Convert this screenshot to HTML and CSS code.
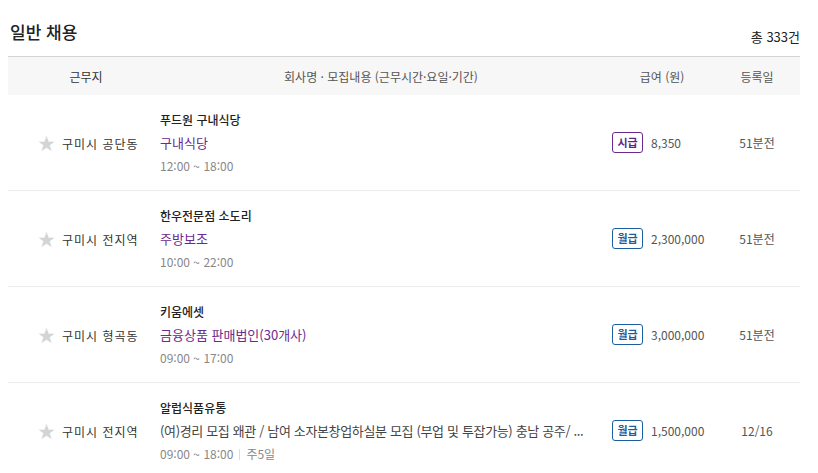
FILE: index.html
```html
<!DOCTYPE html>
<html lang="ko">
<head>
    <meta charset="UTF-8">
    <title>일반 채용</title>
    <link rel="stylesheet" href="styles.css">
</head>
<body>
<div class="jobs">
    <div class="jobs-head">
        <h2>일반 채용</h2>
        <span class="total">총 333건</span>
    </div>

    <div class="table">
        <div class="row head">
            <div class="col-loc">근무지</div>
            <div class="col-info">회사명 · 모집내용 (근무시간·요일·기간)</div>
            <div class="col-pay">급여 (원)</div>
            <div class="col-date">등록일</div>
        </div>

        <div class="row">
            <div class="col-loc"><span class="star">★</span>구미시 공단동</div>
            <div class="col-info">
                <div class="company">푸드원 구내식당</div>
                <div class="title">구내식당</div>
                <div class="time">12:00 ~ 18:00</div>
            </div>
            <div class="col-pay"><span class="badge hourly">시급</span>8,350</div>
            <div class="col-date">51분전</div>
        </div>

        <div class="row">
            <div class="col-loc"><span class="star">★</span>구미시 전지역</div>
            <div class="col-info">
                <div class="company">한우전문점 소도리</div>
                <div class="title">주방보조</div>
                <div class="time">10:00 ~ 22:00</div>
            </div>
            <div class="col-pay"><span class="badge monthly">월급</span>2,300,000</div>
            <div class="col-date">51분전</div>
        </div>

        <div class="row">
            <div class="col-loc"><span class="star">★</span>구미시 형곡동</div>
            <div class="col-info">
                <div class="company">키움에셋</div>
                <div class="title">금융상품 판매법인(30개사)</div>
                <div class="time">09:00 ~ 17:00</div>
            </div>
            <div class="col-pay"><span class="badge monthly">월급</span>3,000,000</div>
            <div class="col-date">51분전</div>
        </div>

        <div class="row">
            <div class="col-loc"><span class="star">★</span>구미시 전지역</div>
            <div class="col-info">
                <div class="company">알럽식품유통</div>
                <div class="title plain">(여)경리 모집 왜관 / 남여 소자본창업하실분 모집 (부업 및 투잡가능) 충남 공주/ ...</div>
                <div class="time">09:00 ~ 18:00<span class="sep"></span>주5일</div>
            </div>
            <div class="col-pay"><span class="badge monthly">월급</span>1,500,000</div>
            <div class="col-date">12/16</div>
        </div>
    </div>
</div>
</body>
</html>
```

FILE: styles.css
```css
body {
    margin: 0;
    background: #fff;
    font-family: "Noto Sans CJK KR", "Noto Sans", sans-serif;
    color: #333;
}

.jobs {
    padding: 20px 18px 0 8px;
}

.jobs-head {
    display: flex;
    justify-content: space-between;
    align-items: flex-end;
    padding: 0 0 12px 2px;
}

.jobs-head h2 {
    margin: 0;
    font-size: 17px;
    font-weight: 500;
    line-height: 24px;
    color: #222;
}

.total {
    font-size: 13px;
    line-height: 16px;
    color: #222;
    margin-bottom: -1px;
}

.table {
    border-top: 1px solid #d3d3d3;
}

.row {
    display: flex;
    align-items: center;
    height: 95px;
    border-bottom: 1px solid #ececec;
    font-size: 12px;
}

.row.head {
    height: 38px;
    background: #f7f7f7;
    border-bottom: none;
    color: #555;
    font-size: 12px;
}

.col-loc {
    width: 152px;
    padding-left: 30px;
    box-sizing: border-box;
    color: #333;
    letter-spacing: 1px;
}

.col-info {
    width: 442px;
    min-width: 0;
}

.col-pay {
    width: 120px;
    padding-left: 10px;
    box-sizing: border-box;
    display: flex;
    align-items: center;
    color: #555;
}

.col-date {
    flex: 1;
    text-align: center;
    padding-right: 8px;
    color: #555;
}

.head .col-loc,
.head .col-info,
.head .col-pay {
    text-align: center;
    letter-spacing: 0;
    display: block;
}

.head .col-loc {
    padding-left: 4px;
}

.head .col-pay {
    padding-left: 0;
}

.star {
    color: #d4d4d4;
    font-size: 17px;
    margin-right: 7px;
    letter-spacing: 0;
    vertical-align: -1px;
}

.company {
    font-size: 12px;
    font-weight: 500;
    line-height: 23px;
    color: #222;
}

.title {
    font-size: 13px;
    line-height: 23px;
    color: #6b2a8e;
    white-space: nowrap;
}

.title.plain {
    color: #444;
    letter-spacing: -0.35px;
}

.time {
    font-size: 12px;
    line-height: 23px;
    color: #888;
}

.sep {
    display: inline-block;
    width: 1px;
    height: 11px;
    background: #ddd;
    margin: 0 6px;
    vertical-align: -1px;
}

.badge {
    display: inline-block;
    width: 31px;
    height: 21px;
    box-sizing: border-box;
    border: 1px solid;
    border-radius: 3px;
    font-size: 11px;
    font-weight: 700;
    line-height: 19px;
    text-align: center;
    margin-right: 8px;
}

.badge.hourly {
    color: #5b2785;
    border-color: #6b2a8e;
}

.badge.monthly {
    color: #1d5e9c;
    border-color: #1d5e9c;
}
```
